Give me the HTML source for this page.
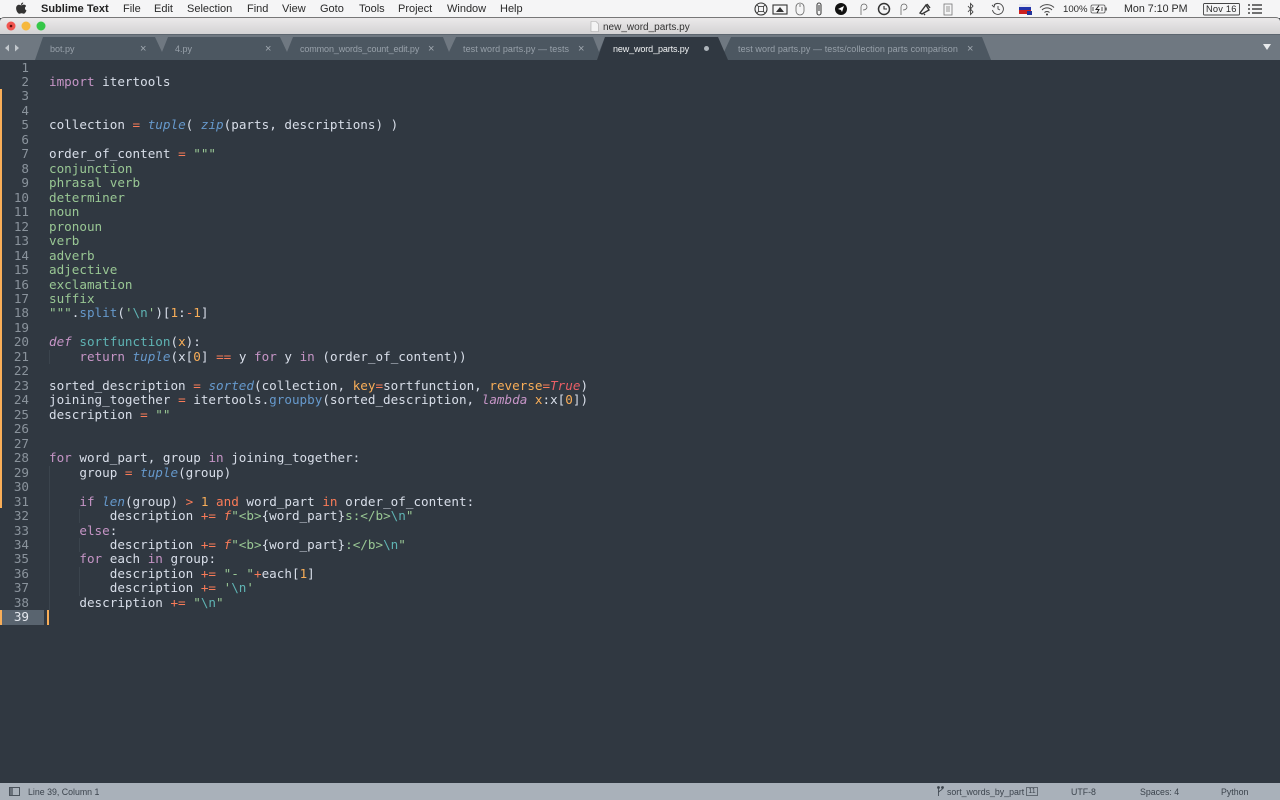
<!DOCTYPE html>
<html lang="en"><head><meta charset="utf-8"><title>new_word_parts.py</title>
<style>
*{margin:0;padding:0;box-sizing:border-box}
html,body{width:1280px;height:800px;overflow:hidden;background:#303841}
body{position:relative;font-family:"Liberation Sans",sans-serif;filter:blur(.3px)}
.a{position:absolute;white-space:nowrap}
#menu{left:0;top:0;width:1280px;height:18px;background:#f5f5f6}
.m{position:absolute;top:3px;font-size:11px;line-height:13px;color:#2a2a2a;white-space:nowrap}
#title{left:0;top:17px;width:1280px;height:18px;background:linear-gradient(#ebe9ea,#d2d1d2);border-top:1px solid #777;border-radius:4px 4px 0 0}
.t{position:absolute;top:43px;font-size:9px;line-height:13px;color:#98a1aa;white-space:nowrap}
.x{position:absolute;top:43px;font-size:11px;line-height:13px;color:#a0a8b0}
pre{position:absolute;top:60.5px;font-family:"DejaVu Sans Mono",monospace;font-size:12.62px;line-height:14.47px;color:#d8dee9}
#nums{left:0;width:29px;text-align:right;color:#8a939c}
#code{left:49px}
.k{color:#c695c6}.ki{color:#c695c6;font-style:italic}.b{color:#6699cc;font-style:italic}.o{color:#f97b58}
.s{color:#99c794}.f{color:#5fb4b4}.n{color:#f9ae58}.u{color:#6699cc}.r{color:#ec5f66;font-style:italic}.fi{color:#f97b58;font-style:italic}
#status{left:0;top:783px;width:1280px;height:17px;background:#a9b1ba}
.st{position:absolute;top:785.5px;font-size:8.8px;line-height:13px;color:#3b434c;white-space:nowrap}
</style></head><body>
<div class="a" id="menu"></div>
<svg class="a" style="left:15px;top:2px" width="12" height="13" viewBox="0 0 12 13"><path d="M8.2 0.5c0 1.2-1 2.4-2.300 2.400c-0.100-1.200 1-2.400 2.300-2.400zM11 4.200c-1.600 1-1.300 3.500 0.500 4.200c-0.500 1.400-1.500 3.300-2.700 3.300c-0.800 0-1.200-0.500-2.200-0.500s-1.400 0.500-2.200 0.500c-1.500 0-3.300-3-3.300-5.500c0-2.300 1.500-3.500 2.900-3.500c0.900 0 1.700 0.600 2.300 0.600s1.500-0.700 2.600-0.700c0.800 0 1.500 0.400 2.100 1.100z" fill="#333"/></svg>
<div class="m" style="left:41px;font-weight:bold;color:#222">Sublime Text</div>
<div class="m" style="left:123px">File</div>
<div class="m" style="left:154px">Edit</div>
<div class="m" style="left:187px">Selection</div>
<div class="m" style="left:247px">Find</div>
<div class="m" style="left:282px">View</div>
<div class="m" style="left:320px">Goto</div>
<div class="m" style="left:359px">Tools</div>
<div class="m" style="left:398px">Project</div>
<div class="m" style="left:447px">Window</div>
<div class="m" style="left:500px">Help</div>

<svg class="a" style="left:750px;top:0" width="530" height="18" viewBox="750 0 530 18" fill="none" stroke="#333" stroke-width="1.100">
<circle cx="761" cy="9" r="6"/><rect x="758.500" y="6.500" width="5" height="5" stroke-width=".8"/><path d="M758.500 6.500l-1.500-1.500M763.500 6.500l1.500-1.500M758.500 11.500l-1.500 1.500M763.500 11.500l1.500 1.500" stroke-width=".8"/>
<rect x="773" y="5" width="14" height="9"/><path d="M776 12l4-5 4 5z" fill="#333" stroke="none"/>
<rect x="796" y="3" width="8" height="12" rx="4" stroke="#666" stroke-width=".8"/><path d="M800 4v3" stroke="#666" stroke-width=".8"/>
<path d="M817 5v8a2 2 0 0 0 4 0V5a2 2 0 0 0-4 0z" stroke="#444"/><path d="M819 5v6" stroke="#444"/>
<circle cx="841" cy="9" r="6" fill="#111" stroke="none"/><path d="M838 9l6-3-2 6-1-2z" fill="#fff" stroke="none"/>
<path d="M861 15V7a3 3 0 0 1 6 0c0 2-2 3-4 3" stroke="#666" stroke-width=".8"/>
<circle cx="884" cy="9" r="5.500" stroke-width="1.500"/><path d="M884 6v3h3"/>
<path d="M901 15V7a3 3 0 0 1 6 0c0 2-2 3-4 3" stroke="#666" stroke-width=".8"/>
<path d="M920 13l6-8 3 5-7 4zM927 4l3 4M924 14l1 1" stroke-width="1.400"/>
<rect x="944" y="4" width="8" height="11" stroke="#777" stroke-width=".8"/><path d="M946 7h4M946 9h4M946 11h4" stroke="#777" stroke-width=".7"/>
<path d="M968 6l5 6-2.500 2.500v-11L973 6l-5 6" stroke="#444" stroke-width=".9"/>
<path d="M994 5a5.500 5.500 0 1 1-1.500 5M992 5l2 2 1-3M998 6v3l2 1" stroke="#444" stroke-width=".9"/>
<rect x="1019" y="4" width="12" height="4" fill="#e8e8ee" stroke="none"/><rect x="1019" y="7" width="12" height="4" fill="#2233aa" stroke="none"/><rect x="1019" y="10" width="12" height="4" fill="#cc2020" stroke="none"/><rect x="1027" y="11" width="5" height="4" fill="#223399" stroke="none"/>
<path d="M1040 7.500a10 10 0 0 1 14 0M1042 10a7 7 0 0 1 10 0M1044.500 12.500a3.500 3.500 0 0 1 5 0" stroke="#444" stroke-width="1"/><circle cx="1047" cy="14.500" r="1" fill="#333" stroke="none"/>
<rect x="1091" y="5" width="14" height="8" rx="1.500" stroke="#555" stroke-width=".8"/><path d="M1099 5.500l-3 4h3l-2 3.500" stroke="#222" stroke-width="1"/><path d="M1093 7v4M1102 7v4" stroke="#888" stroke-width="1.500"/><rect x="1105.500" y="7.500" width="1.200" height="3" fill="#444" stroke="none"/>
<rect x="1203.500" y="3.500" width="36" height="11.500" rx="1" stroke="#444" stroke-width=".9"/>
<path d="M1248 5h2M1248 9h2M1248 13h2M1252 5h10M1252 9h10M1252 13h10" stroke="#222" stroke-width="1.200"/>
</svg>
<div class="m" style="left:1063px;font-size:9.6px">100%</div>
<div class="m" style="left:1124px;font-size:10.7px">Mon 7:10 PM</div>
<div class="m" style="left:1206px;font-size:9.3px;letter-spacing:.2px">Nov 16</div>

<div class="a" id="title"></div>
<svg class="a" style="left:5px;top:20px" width="44" height="12"><circle cx="6" cy="6" r="4.500" fill="#f0544f"/><circle cx="6" cy="6" r="1.300" fill="#5e0f0c"/><circle cx="21" cy="6" r="4.500" fill="#f6b83c"/><circle cx="36" cy="6" r="4.500" fill="#35c748"/></svg>
<svg class="a" style="left:590px;top:21px" width="9" height="11"><path d="M1 .5h5l2.500 2.500v7.500h-7.500z" fill="#f4f4f4" stroke="#aaa" stroke-width=".6"/></svg>
<div class="a" style="left:603px;top:20.500px;font-size:10px;line-height:13px;color:#333">new_word_parts.py</div>

<svg class="a" style="left:0;top:34px" width="1280" height="26" viewBox="0 34 1280 26">
<rect x="0" y="34" width="1280" height="26" fill="#6f7881"/>
<rect x="0" y="34" width="1280" height="1" fill="#5d666f"/>
<path d="M43 37H982L991 60H35z" fill="#4c5761"/>
<path d="M155 37H168L162 52z" fill="#6f7881"/>
<path d="M280 37H293L287 52z" fill="#6f7881"/>
<path d="M443 37H456L449 52z" fill="#6f7881"/>
<path d="M593 37H605L599 52z" fill="#6f7881"/>
<path d="M718 37H731L724 52z" fill="#6f7881"/>
<path d="M605 37H718L728 60H597z" fill="#303841"/>
<path d="M9 44.500l-4 3.500 4 3.500zM15 44.500l4 3.500-4 3.500z" fill="#c3c8cd"/>
<path d="M1263 44h8l-4 6z" fill="#e8ebed"/>
</svg>
<div class="t" style="left:50px">bot.py</div><div class="x" style="left:140px">×</div>
<div class="t" style="left:175px">4.py</div><div class="x" style="left:265px">×</div>
<div class="t" style="left:300px;letter-spacing:-.11px">common_words_count_edit.py</div><div class="x" style="left:428px">×</div>
<div class="t" style="left:463px;letter-spacing:.08px">test word parts.py — tests</div><div class="x" style="left:578px">×</div>
<div class="t" style="left:613px;color:#f2f4f5;letter-spacing:-.12px">new_word_parts.py</div>
<div class="a" style="left:704px;top:46px;width:5px;height:5px;border-radius:50%;background:#aeb5bb"></div>
<div class="t" style="left:738px;letter-spacing:.08px">test word parts.py — tests/collection parts comparison</div><div class="x" style="left:967px">×</div>

<div class="a" style="left:0;top:89px;width:2px;height:419px;background:#f9ae58"></div>
<div class="a" style="left:0;top:610px;width:44px;height:15px;background:#59646f"></div>
<div class="a" style="left:0;top:610px;width:2px;height:15px;background:#f9ae58"></div>
<div class="a" style="left:47px;top:610px;width:1.500px;height:15px;background:#f9ae58"></div>
<div class="a" style="left:49px;top:350px;width:1px;height:14px;background:#3b444d"></div>
<div class="a" style="left:49px;top:466px;width:1px;height:144px;background:#3b444d"></div>
<div class="a" style="left:79px;top:509px;width:1px;height:14px;background:#3b444d"></div>
<div class="a" style="left:79px;top:538px;width:1px;height:14px;background:#3b444d"></div>
<div class="a" style="left:79px;top:567px;width:1px;height:29px;background:#3b444d"></div>

<pre id="nums">1
2
3
4
5
6
7
8
9
10
11
12
13
14
15
16
17
18
19
20
21
22
23
24
25
26
27
28
29
30
31
32
33
34
35
36
37
38
<span style="color:#e4e8ee">39</span></pre>
<pre id="code">

<span class="k">import</span> itertools


collection <span class="o">=</span> <span class="b">tuple</span>( <span class="b">zip</span>(parts, descriptions) )

order_of_content <span class="o">=</span> <span class="s">"""</span>
<span class="s">conjunction
phrasal verb
determiner
noun
pronoun
verb
adverb
adjective
exclamation
suffix
"""</span>.<span class="u">split</span>(<span class="s">'</span><span class="f">\n</span><span class="s">'</span>)[<span class="n">1</span>:<span class="o">-</span><span class="n">1</span>]

<span class="ki">def</span> <span class="f">sortfunction</span>(<span class="n">x</span>):
    <span class="k">return</span> <span class="b">tuple</span>(x[<span class="n">0</span>] <span class="o">==</span> y <span class="k">for</span> y <span class="k">in</span> (order_of_content))

sorted_description <span class="o">=</span> <span class="b">sorted</span>(collection, <span class="n">key</span><span class="o">=</span>sortfunction, <span class="n">reverse</span><span class="o">=</span><span class="r">True</span>)
joining_together <span class="o">=</span> itertools.<span class="u">groupby</span>(sorted_description, <span class="ki">lambda</span> <span class="n">x</span>:x[<span class="n">0</span>])
description <span class="o">=</span> <span class="s">""</span>


<span class="k">for</span> word_part, group <span class="k">in</span> joining_together:
    group <span class="o">=</span> <span class="b">tuple</span>(group)

    <span class="k">if</span> <span class="b">len</span>(group) <span class="o">&gt;</span> <span class="n">1</span> <span class="o">and</span> word_part <span class="o">in</span> order_of_content:
        description <span class="o">+=</span> <span class="fi">f</span><span class="s">"&lt;b&gt;</span>{word_part}<span class="s">s:&lt;/b&gt;</span><span class="f">\n</span><span class="s">"</span>
    <span class="k">else</span>:
        description <span class="o">+=</span> <span class="fi">f</span><span class="s">"&lt;b&gt;</span>{word_part}<span class="s">:&lt;/b&gt;</span><span class="f">\n</span><span class="s">"</span>
    <span class="k">for</span> each <span class="k">in</span> group:
        description <span class="o">+=</span> <span class="s">"- "</span><span class="o">+</span>each[<span class="n">1</span>]
        description <span class="o">+=</span> <span class="s">'</span><span class="f">\n</span><span class="s">'</span>
    description <span class="o">+=</span> <span class="s">"</span><span class="f">\n</span><span class="s">"</span></pre>

<div class="a" id="status"></div>
<svg class="a" style="left:9px;top:787px" width="11" height="9"><rect x=".5" y=".5" width="10" height="8" fill="none" stroke="#4a525b"/><rect x="1" y="1" width="3" height="7" fill="#6a727b"/></svg>
<div class="st" style="left:28px">Line 39, Column 1</div>
<svg class="a" style="left:936px;top:786px" width="9" height="11" fill="none" stroke="#3b434c" stroke-width=".8"><path d="M2.500 1v9M2.500 7c0-3 4-2 4-5"/><circle cx="2.500" cy="1.500" r="1" fill="#3b434c"/><circle cx="6.500" cy="1.500" r="1" fill="#3b434c"/></svg>
<div class="st" style="left:947px">sort_words_by_part</div>
<div class="a" style="left:1026px;top:787px;width:12px;height:9px;border:1px solid #626a73;font-size:7px;line-height:7px;text-align:center;color:#3b434c">11</div>
<div class="st" style="left:1071px">UTF-8</div>
<div class="st" style="left:1140px">Spaces: 4</div>
<div class="st" style="left:1221px">Python</div>
</body></html>
